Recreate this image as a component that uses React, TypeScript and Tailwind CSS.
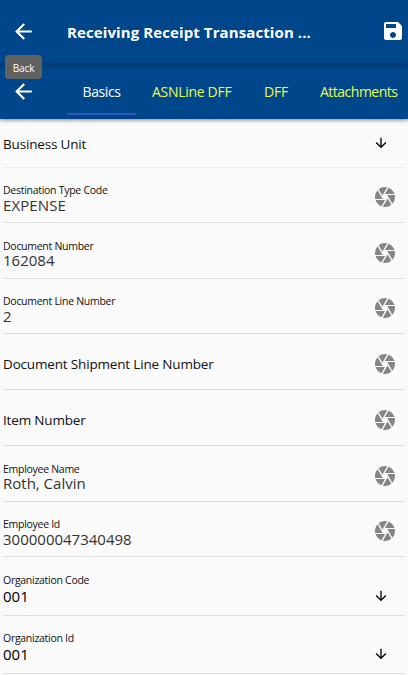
import { MdArrowBack, MdArrowDownward, MdCamera, MdSave } from "react-icons/md";

type Field = {
  label: string;
  value?: string;
  picker?: boolean;
  height: string;
  labelClass: string;
  valueClass?: string;
  iconClass: string;
};

const small = "text-[10.5px] leading-[14px] tracking-[-0.28px]";
const large = "text-[13.5px] leading-5 tracking-[-0.17px]";

const fields: Field[] = [
  { label: "Business Unit", picker: true, height: "h-[49px]", labelClass: `mt-[15px] ${large}`, iconClass: "mt-[16px]" },
  { label: "Destination Type Code", value: "EXPENSE", height: "h-[55px]", labelClass: `mt-[15px] ${small}`, valueClass: "-mt-px text-[#333] tracking-[0.1px]", iconClass: "mt-[17px]" },
  { label: "Document Number", value: "162084", height: "h-[56px]", labelClass: `mt-[16px] ${small}`, valueClass: "-mt-[2px] text-[#333]", iconClass: "mt-[18px]" },
  { label: "Document Line Number", value: "2", height: "h-[55px]", labelClass: `mt-[15px] ${small}`, valueClass: "-mt-px text-[#333]", iconClass: "mt-[17px]" },
  { label: "Document Shipment Line Number", height: "h-[56px]", labelClass: `mt-[20px] ${large}`, iconClass: "mt-[18px]" },
  { label: "Item Number", height: "h-[56px]", labelClass: `mt-[20px] ${large}`, iconClass: "mt-[18px]" },
  { label: "Employee Name", value: "Roth, Calvin", height: "h-[56px]", labelClass: `mt-[16px] ${small}`, valueClass: "-mt-[2px] text-[#333]", iconClass: "mt-[18px]" },
  { label: "Employee Id", value: "300000047340498", height: "h-[55px]", labelClass: `mt-[15px] ${small}`, valueClass: "-mt-px text-[#333]", iconClass: "mt-[17px]" },
  { label: "Organization Code", value: "001", picker: true, height: "h-[59px]", labelClass: `mt-[16px] ${small}`, valueClass: "text-black", iconClass: "mt-[31px]" },
  { label: "Organization Id", value: "001", picker: true, height: "h-[58px]", labelClass: `mt-[15px] ${small}`, valueClass: "text-black", iconClass: "mt-[30px]" },
];

function FieldRow({ field, first }: { field: Field; first: boolean }) {
  return (
    <div className={`ml-[3px] mr-[3px] flex shrink-0 justify-between border-b ${first ? "border-[#f0f0f0]" : "border-[#dedede]"} ${field.height}`}>
      <div className="flex flex-col whitespace-nowrap">
        <span className={`text-[#111] ${field.labelClass}`}>{field.label}</span>
        {field.value && <span className={`text-[15px] leading-[18px] ${field.valueClass}`}>{field.value}</span>}
      </div>
      {field.picker ? (
        <MdArrowDownward className={`mr-4 size-4 text-black ${field.iconClass}`} />
      ) : (
        <MdCamera className={`mr-2 size-6 text-[#858585] ${field.iconClass}`} />
      )}
    </div>
  );
}

const tabs = [
  { name: "ASNLine DFF", style: "ml-4 w-[80px] tracking-[-0.3px]" },
  { name: "DFF", style: "ml-8 w-6 tracking-[-0.2px]" },
  { name: "Attachments", style: "ml-8 w-[78px] tracking-[-0.5px]" },
];

export default function App() {
  return (
    <div className="flex h-[675px] w-[408px] flex-col overflow-hidden bg-[#fafafa] font-['Open_Sans','Noto_Sans',sans-serif]">
      <header className="relative z-10 flex h-[63px] shrink-0 items-center bg-[#00468b] text-white shadow-[0_1px_5px_rgba(0,0,0,0.4)]">
        <button aria-label="Back" className="mb-px ml-[11px]">
          <MdArrowBack className="size-[25px]" />
        </button>
        <h1 className="ml-[31px] flex-1 whitespace-nowrap text-[15px] font-bold leading-6 tracking-[0.1px]">Receiving Receipt Transaction ...</h1>
        <button aria-label="Save" className="mb-[2px] mr-[3px]">
          <MdSave className="size-6" />
        </button>
        <div className="absolute left-[5px] top-[55px] flex h-6 w-[37px] items-center justify-center rounded bg-[#616161] pt-[2px] text-[10px] tracking-[-0.1px]">Back</div>
      </header>
      <nav className="relative flex h-14 shrink-0 items-center whitespace-nowrap bg-[#00468b] text-[14px] text-[#e4ff4d] shadow-[0_1px_4px_rgba(0,0,0,0.5)]">
        <button aria-label="Previous" className="ml-[11px] text-white">
          <MdArrowBack className="size-[25px]" />
        </button>
        <div className="ml-[31px] mt-[5px] flex h-[47px] w-[69px] items-center justify-center self-start border-b-2 border-[#3455bd] pt-px tracking-[-0.4px] text-white">Basics</div>
        {tabs.map((tab) => (
          <span key={tab.name} className={tab.style}>{tab.name}</span>
        ))}
      </nav>
      <main className="flex flex-col">
        {fields.map((field, index) => (
          <FieldRow key={field.label} field={field} first={index === 0} />
        ))}
      </main>
    </div>
  );
}
